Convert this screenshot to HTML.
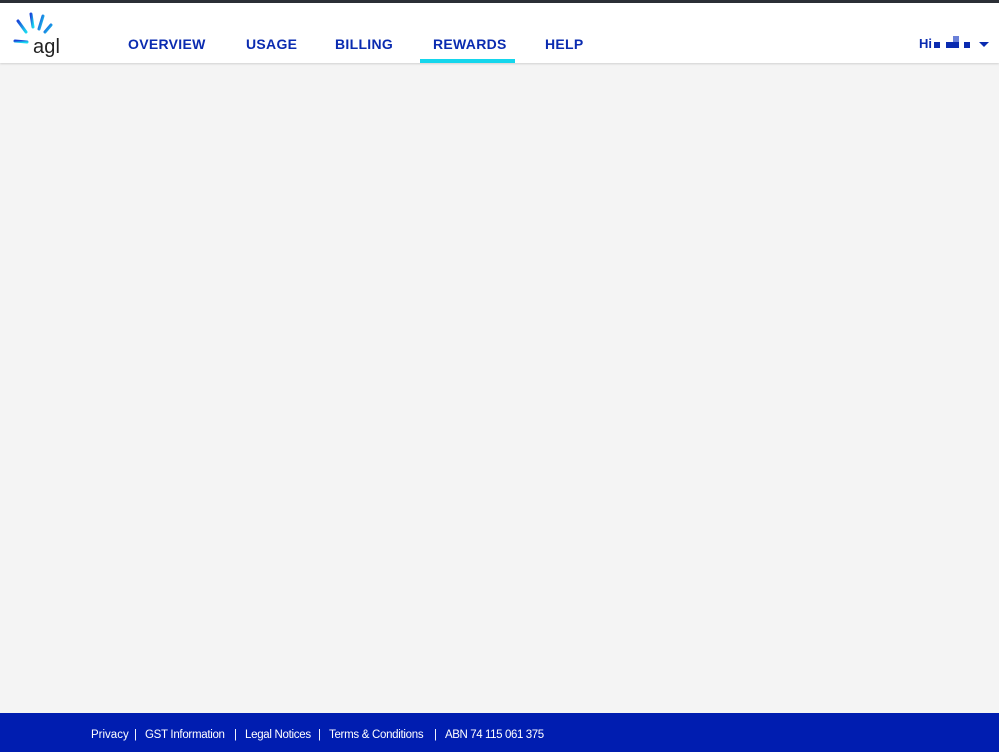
<!DOCTYPE html>
<html><head><style>
body{margin:0;width:999px;height:752px;background:#f4f4f4;font-family:"Liberation Sans",sans-serif;position:relative;overflow:hidden}
.top{position:absolute;left:0;top:0;width:999px;height:3px;background:#2b2f36}
.hdr{position:absolute;left:0;top:3px;width:999px;height:60px;background:#fff;box-shadow:0 1px 2px rgba(0,0,0,.15)}
.nav{position:absolute;top:36px;font-weight:bold;font-size:14px;letter-spacing:0.3px;color:#0a2bb0}
.ul{position:absolute;left:420px;top:59px;width:95px;height:4px;background:#14d6ec}
.ft{position:absolute;left:0;top:713px;width:999px;height:39px;background:#001db0;color:#fff;font-size:11.5px}
.ft span{position:absolute;top:16px;white-space:nowrap}
</style></head><body>
<div class="top"></div>
<div class="hdr"></div>
<svg style="position:absolute;left:0;top:0" width="70" height="60">
<defs><linearGradient id="g" x1="0" y1="0" x2="1" y2="1"><stop offset="0" stop-color="#1a46d8"/><stop offset="1" stop-color="#1ad8f0"/></linearGradient></defs>
<g stroke="url(#g)" stroke-width="3" stroke-linecap="round">
<line x1="31" y1="14" x2="33" y2="27"/>
<line x1="43" y1="16" x2="39" y2="29"/>
<line x1="51" y1="25" x2="45" y2="32"/>
<line x1="18" y1="21" x2="26" y2="32"/>
<line x1="15" y1="41" x2="27" y2="42"/>
</g>
<text x="33" y="53" font-family="Liberation Sans,sans-serif" font-size="20" fill="#222" textLength="27">agl</text>
</svg>
<div class="nav" style="left:128px">OVERVIEW</div>
<div class="nav" style="left:246px">USAGE</div>
<div class="nav" style="left:335px">BILLING</div>
<div class="nav" style="left:433px">REWARDS</div>
<div class="nav" style="left:545px">HELP</div>
<div class="ul"></div>
<div class="nav" style="left:919px;letter-spacing:0;font-size:13px">Hi</div>
<div style="position:absolute;left:934px;top:42px;width:6px;height:6px;background:#0a2bb0"></div>
<div style="position:absolute;left:946px;top:42px;width:13px;height:6px;background:#0a2bb0"></div>
<div style="position:absolute;left:953px;top:36px;width:6px;height:6px;background:#6a80d8"></div>
<div style="position:absolute;left:964px;top:42px;width:6px;height:6px;background:#0a2bb0"></div>
<div style="position:absolute;left:979px;top:42px;border-left:5px solid transparent;border-right:5px solid transparent;border-top:5px solid #0a2bb0"></div>
<div class="ft">
<span style="left:91px">Privacy</span><span style="left:134px">|</span>
<span style="left:145px;letter-spacing:-0.3px">GST Information</span><span style="left:234px">|</span>
<span style="left:245px;letter-spacing:-0.3px">Legal Notices</span><span style="left:318px">|</span>
<span style="left:329px;letter-spacing:-0.3px">Terms &amp; Conditions</span><span style="left:434px">|</span>
<span style="left:445px;letter-spacing:-0.4px">ABN 74 115 061 375</span>
</div>
</body></html>
